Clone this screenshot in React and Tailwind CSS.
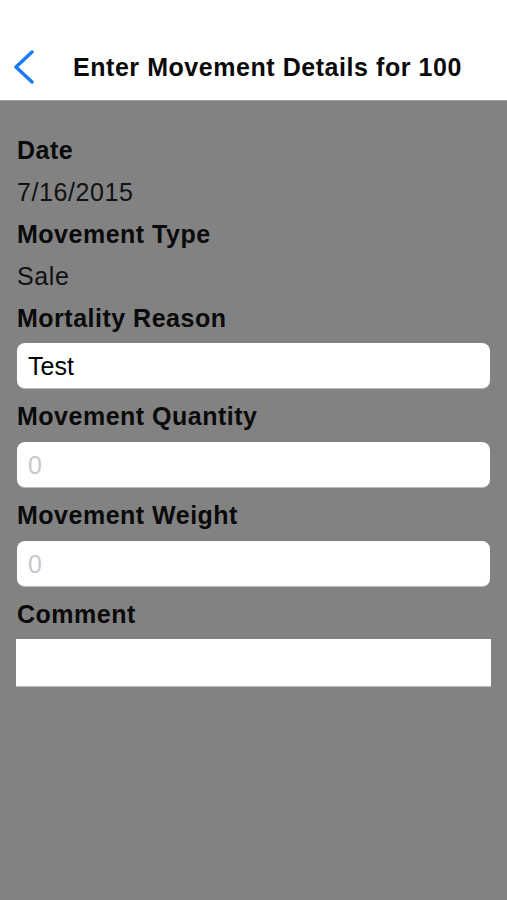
import React from 'react';

const font = { fontFamily: '"Liberation Sans", Arial, sans-serif' };

const Label = ({ children, h = 'h-[42px]' }) => (
  <div className={`${h} flex items-center pt-[3px] text-[25px] font-bold tracking-[0.5px] text-[#0a0a0a]`}>{children}</div>
);

const Value = ({ children }) => (
  <div className="h-[42px] flex items-center pt-[3px] text-[25px] tracking-[0.6px] text-[#111]">{children}</div>
);

const Field = ({ value, placeholder }) => (
  <div className="h-[46px] rounded-[8px] bg-white flex items-center px-[11px] pt-[3px] text-[25px] border-b border-[#bbb]">
    {value ? <span className="text-black">{value}</span> : <span className="text-[#c7c7cd]">{placeholder}</span>}
  </div>
);

export default function App() {
  return (
    <div className="min-h-screen flex flex-col bg-[#828282]" style={font}>
      {/* Nav bar */}
      <header className="h-[101px] bg-white pt-[40px] border-b border-[#a3a3a3]">
        <div className="h-[54px] flex items-center pl-[12px]">
          <svg width="24" height="34" viewBox="0 0 24 34" fill="none">
            <polyline points="20,2 4,17 20,32" stroke="#1a7cf5" strokeWidth="3.5" strokeLinecap="round" strokeLinejoin="round" />
          </svg>
          <h1 className="ml-[37px] pt-[2px] text-[25px] font-bold tracking-[0.55px] text-[#0a0a0a]">Enter Movement Details for 100</h1>
        </div>
      </header>

      {/* Form */}
      <main className="flex-1 px-[17px] pt-[27px] flex flex-col">
        <Label>Date</Label>
        <Value>7/16/2015</Value>
        <Label>Movement Type</Label>
        <Value>Sale</Value>
        <Label>Mortality Reason</Label>
        <div className="mt-[5px]">
          <Field value="Test" />
        </div>
        <Label h="h-[53px]">Movement Quantity</Label>
        <Field placeholder="0" />
        <Label h="h-[53px]">Movement Weight</Label>
        <Field placeholder="0" />
        <Label h="h-[52px]">Comment</Label>
        <div className="-mx-px h-[48px] bg-white border-b border-[#bbb]" />
      </main>
    </div>
  );
}
